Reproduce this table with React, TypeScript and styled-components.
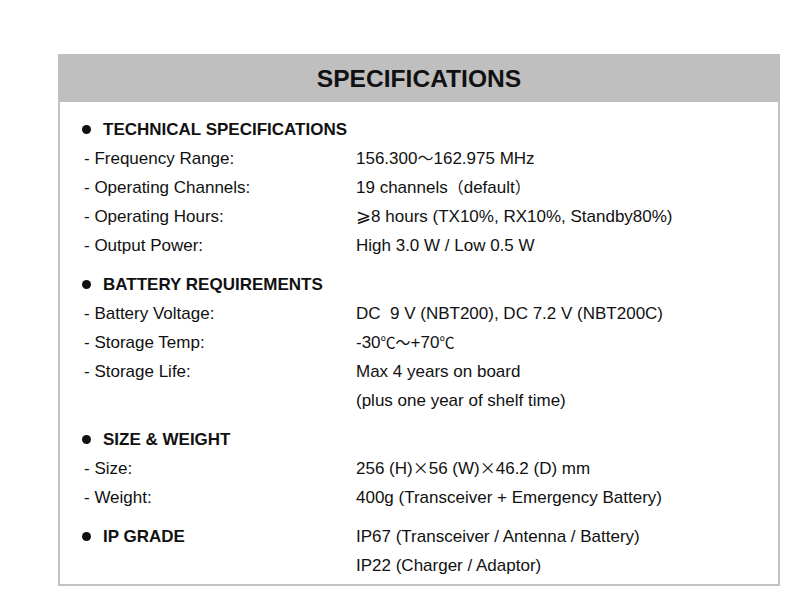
import styled, { createGlobalStyle } from "styled-components";

const GlobalStyle = createGlobalStyle`
    body {
        margin: 0;
        background: #ffffff;
        font-family: "Liberation Sans", Arial, sans-serif;
        color: #111111;
    }
`

const Page = styled.div`
    padding: 54px 0 0 58px;
`

const Panel = styled.section`
    width: 718px;
    border: 2px solid #c2c2c2;
    border-top: none;
    background: #ffffff;
`

const Header = styled.header`
    background-color: #bfbfbf;
    height: 48px;
    margin: 0 -2px;
    display: flex;
    align-items: center;
    justify-content: center;
`

const Title = styled.h1`
    margin: 0;
    font-size: 24.6px;
    font-weight: 700;
    color: #111111;
    padding-top: 2px;
`

const Body = styled.div`
    padding: 13px 0 4px 22px;
    display: flex;
    flex-direction: column;
    gap: 10px;
`

const Section = styled.div`
    display: grid;
    grid-template-columns: 274px 1fr;
    grid-auto-rows: 29px;
    font-size: 17px;
    line-height: 29px;
`

const Heading = styled.div`
    display: flex;
    align-items: center;
    font-weight: 700;
    grid-column: ${props => props.$wide ? "1 / span 2" : "1"};
`

const Dot = styled.span`
    width: 9px;
    height: 9px;
    border-radius: 50%;
    background: #111111;
    margin-right: 12px;
`

const Label = styled.div`
    grid-column: 1;
    white-space: nowrap;
    padding-left: 2px;
`

const Value = styled.div`
    grid-column: 2;
    white-space: pre;
`

const Cjk = styled.span`
    font-family: "Noto Sans CJK SC", "DejaVu Sans", sans-serif;
    font-size: ${props => props.$size || "16px"};
    line-height: 1;
`

type Row = [string, React.ReactNode]

const sections: { title: string; rows: Row[] }[] = [
    {
        title: "TECHNICAL SPECIFICATIONS",
        rows: [
            ["- Frequency Range:", <>156.300<Cjk>～</Cjk>162.975 MHz</>],
            ["- Operating Channels:", <>19 channels<Cjk>（</Cjk>default<Cjk>）</Cjk></>],
            ["- Operating Hours:", <><Cjk $size="18px">⩾</Cjk>8 hours (TX10%, RX10%, Standby80%)</>],
            ["- Output Power:", "High 3.0 W / Low 0.5 W"],
        ],
    },
    {
        title: "BATTERY REQUIREMENTS",
        rows: [
            ["- Battery Voltage:", "DC  9 V (NBT200), DC 7.2 V (NBT200C)"],
            ["- Storage Temp:", <>-30<Cjk $size="15px">℃～</Cjk>+70<Cjk $size="15px">℃</Cjk></>],
            ["- Storage Life:", "Max 4 years on board"],
            ["", "(plus one year of shelf time)"],
        ],
    },
    {
        title: "SIZE & WEIGHT",
        rows: [
            ["- Size:", <>256 (H)<Cjk>×</Cjk>56 (W)<Cjk>×</Cjk>46.2 (D) mm</>],
            ["- Weight:", "400g (Transceiver + Emergency Battery)"],
        ],
    },
]

export default function App() {
    return (
        <Page>
            <GlobalStyle />
            <Panel>
                <Header>
                    <Title>SPECIFICATIONS</Title>
                </Header>
                <Body>
                    {sections.map(section => (
                        <Section key={section.title}>
                            <Heading $wide><Dot />{section.title}</Heading>
                            {section.rows.map(([label, value], i) => (
                                <>
                                    <Label key={"l" + i}>{label}</Label>
                                    <Value key={"v" + i}>{value}</Value>
                                </>
                            ))}
                        </Section>
                    ))}
                    <Section>
                        <Heading><Dot />IP GRADE</Heading>
                        <Value>IP67 (Transceiver / Antenna / Battery)</Value>
                        <Value>IP22 (Charger / Adaptor)</Value>
                    </Section>
                </Body>
            </Panel>
        </Page>
    )
}
